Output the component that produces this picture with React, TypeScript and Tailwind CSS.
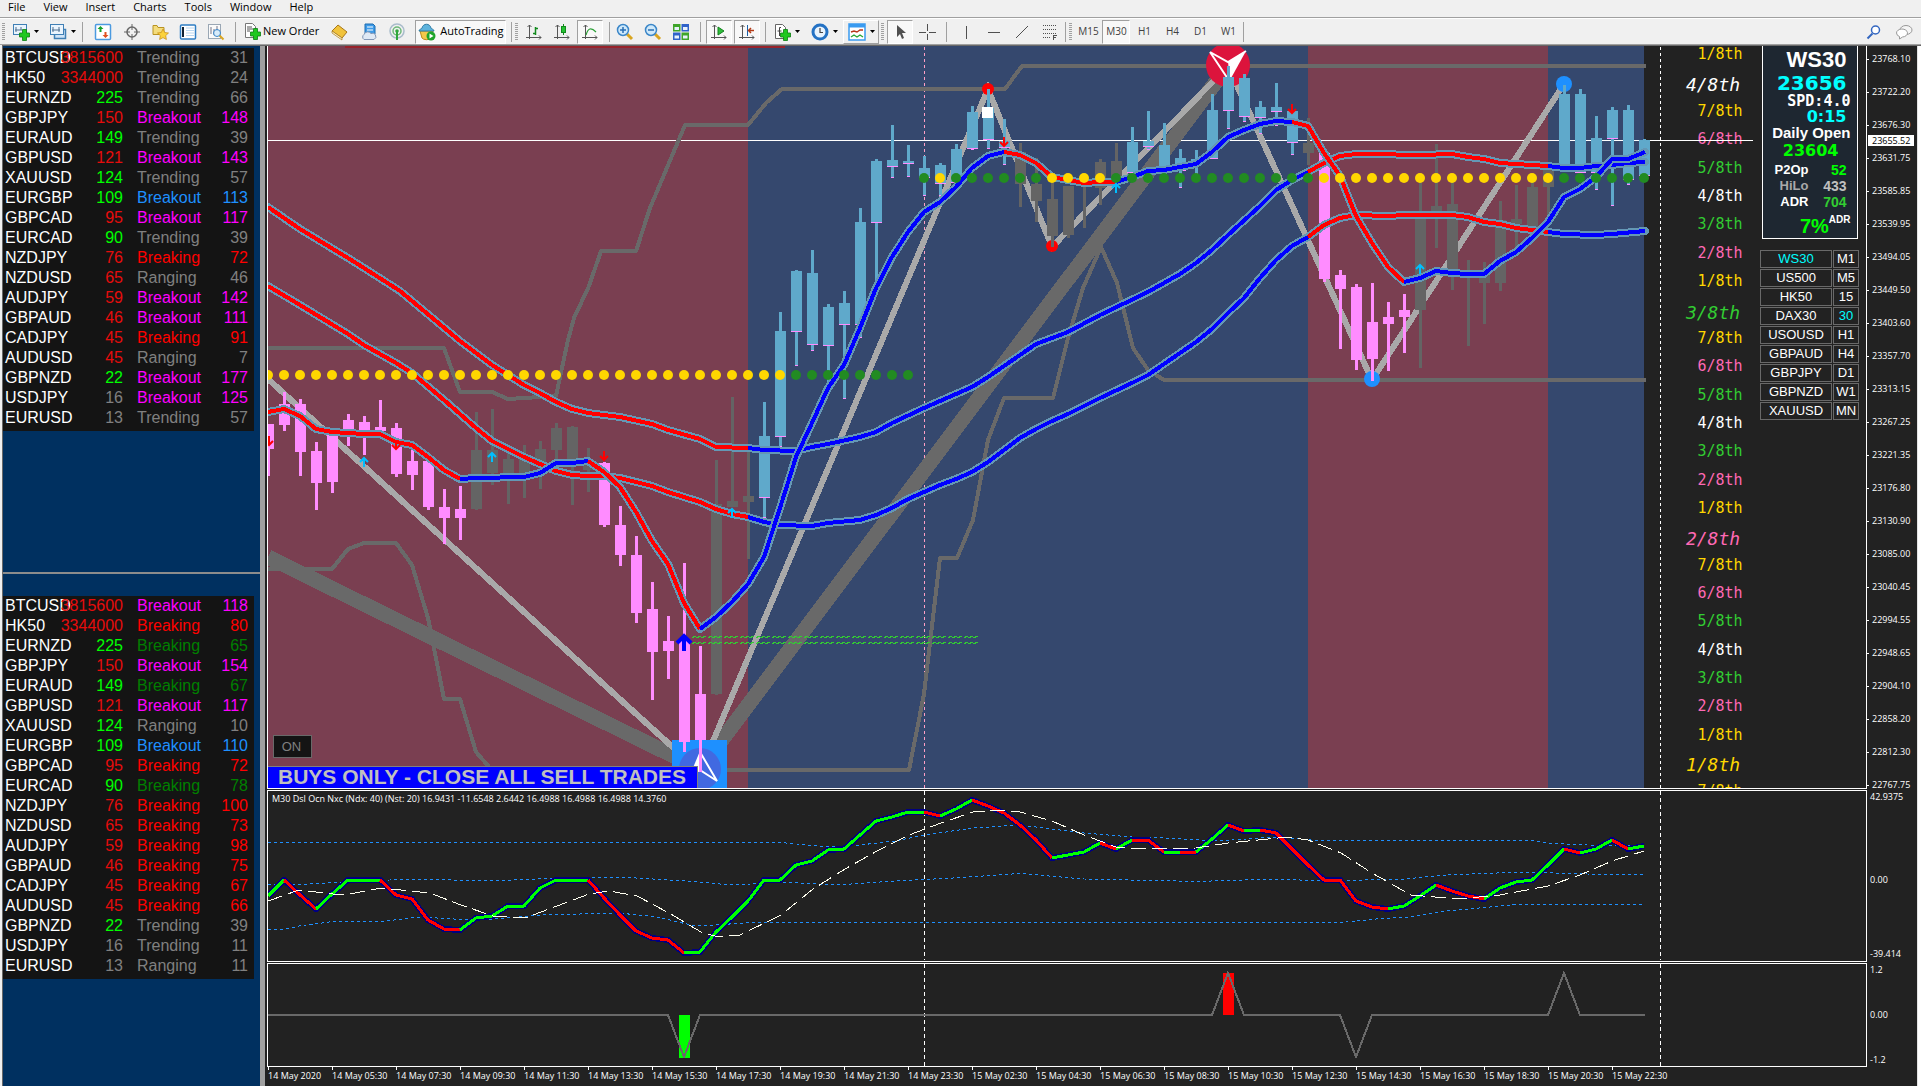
import type { ReactNode } from 'react';

const MENU = ['File', 'View', 'Insert', 'Charts', 'Tools', 'Window', 'Help'];

const STATE_COLORS: Record<string, string> = {
  g: 'text-[#808080]',
  m: 'text-[#ff00ff]',
  r: 'text-[#ff0000]',
  b: 'text-[#1e90ff]',
  d: 'text-[#008000]',
  l: 'text-[#00ff00]',
  c: 'text-[#e60c0c]',
};

type WatchRow = [string, string, string];

const SYMBOLS: WatchRow[] = [
  ['BTCUSD', '3815600', 'c'],
  ['HK50', '3344000', 'c'],
  ['EURNZD', '225', 'l'],
  ['GBPJPY', '150', 'c'],
  ['EURAUD', '149', 'l'],
  ['GBPUSD', '121', 'c'],
  ['XAUUSD', '124', 'l'],
  ['EURGBP', '109', 'l'],
  ['GBPCAD', '95', 'c'],
  ['EURCAD', '90', 'l'],
  ['NZDJPY', '76', 'c'],
  ['NZDUSD', '65', 'c'],
  ['AUDJPY', '59', 'c'],
  ['GBPAUD', '46', 'c'],
  ['CADJPY', '45', 'c'],
  ['AUDUSD', '45', 'c'],
  ['GBPNZD', '22', 'l'],
  ['USDJPY', '16', 'g'],
  ['EURUSD', '13', 'g'],
];

const STATES_TOP: WatchRow[] = [
  ['Trending', '31', 'g'],
  ['Trending', '24', 'g'],
  ['Trending', '66', 'g'],
  ['Breakout', '148', 'm'],
  ['Trending', '39', 'g'],
  ['Breakout', '143', 'm'],
  ['Trending', '57', 'g'],
  ['Breakout', '113', 'b'],
  ['Breakout', '117', 'm'],
  ['Trending', '39', 'g'],
  ['Breaking', '72', 'r'],
  ['Ranging', '46', 'g'],
  ['Breakout', '142', 'm'],
  ['Breakout', '111', 'm'],
  ['Breaking', '91', 'r'],
  ['Ranging', '7', 'g'],
  ['Breakout', '177', 'm'],
  ['Breakout', '125', 'm'],
  ['Trending', '57', 'g'],
];

const STATES_BOTTOM: WatchRow[] = [
  ['Breakout', '118', 'm'],
  ['Breaking', '80', 'r'],
  ['Breaking', '65', 'd'],
  ['Breakout', '154', 'm'],
  ['Breaking', '67', 'd'],
  ['Breakout', '117', 'm'],
  ['Ranging', '10', 'g'],
  ['Breakout', '110', 'b'],
  ['Breaking', '72', 'r'],
  ['Breaking', '78', 'd'],
  ['Breaking', '100', 'r'],
  ['Breaking', '73', 'r'],
  ['Breaking', '98', 'r'],
  ['Breaking', '75', 'r'],
  ['Breaking', '67', 'r'],
  ['Breaking', '66', 'r'],
  ['Trending', '39', 'g'],
  ['Trending', '11', 'g'],
  ['Ranging', '11', 'g'],
];

const PRICES = [
  '23768.10', '23722.20', '23676.30', '23631.75', '23585.85', '23539.95', '23494.05', '23449.50',
  '23403.60', '23357.70', '23313.15', '23267.25', '23221.35', '23176.80', '23130.90', '23085.00',
  '23040.45', '22994.55', '22948.65', '22904.10', '22858.20', '22812.30', '22767.75',
];

const TIMES = [
  '14 May 2020', '14 May 05:30', '14 May 07:30', '14 May 09:30', '14 May 11:30', '14 May 13:30',
  '14 May 15:30', '14 May 17:30', '14 May 19:30', '14 May 21:30', '14 May 23:30', '15 May 02:30',
  '15 May 04:30', '15 May 06:30', '15 May 08:30', '15 May 10:30', '15 May 12:30', '15 May 14:30',
  '15 May 16:30', '15 May 18:30', '15 May 20:30', '15 May 22:30',
];

const SWITCHER = [
  ['WS30', 'M1'],
  ['US500', 'M5'],
  ['HK50', '15'],
  ['DAX30', '30'],
  ['USOUSD', 'H1'],
  ['GBPAUD', 'H4'],
  ['GBPJPY', 'D1'],
  ['GBPNZD', 'W1'],
  ['XAUUSD', 'MN'],
];

// murrey levels: text, y, colour, major
const GOLD = '#ffd700';
const PINK = '#ff69b4';
const GREEN = '#32cd32';
const LEVELS: [string, number, string, boolean?][] = [
  ['1/8th', 54, GOLD],
  ['4/8th', 85, '#fff', true],
  ['7/8th', 111, GOLD],
  ['6/8th', 139, PINK],
  ['5/8th', 168, GREEN],
  ['4/8th', 196, '#fff'],
  ['3/8th', 224, GREEN],
  ['2/8th', 253, PINK],
  ['1/8th', 281, GOLD],
  ['3/8th', 313, GREEN, true],
  ['7/8th', 338, GOLD],
  ['6/8th', 366, PINK],
  ['5/8th', 395, GREEN],
  ['4/8th', 423, '#fff'],
  ['3/8th', 451, GREEN],
  ['2/8th', 480, PINK],
  ['1/8th', 508, GOLD],
  ['2/8th', 539, PINK, true],
  ['7/8th', 565, GOLD],
  ['6/8th', 593, PINK],
  ['5/8th', 621, GREEN],
  ['4/8th', 650, '#fff'],
  ['3/8th', 678, GREEN],
  ['2/8th', 706, PINK],
  ['1/8th', 735, GOLD],
  ['1/8th', 765, GOLD, true],
  ['7/8th', 791, GOLD],
];

// high, body top, body bottom, low, kind (p = bear, g = neutral, b = bull)
const CANDLES: [number, number, number, number, 'p' | 'g' | 'b'][] = [
  [424, 424, 449, 476, 'p'], [392, 404, 425, 431, 'p'], [399, 404, 452, 476, 'p'], [442, 451, 483, 510, 'p'],
  [435, 435, 482, 493, 'p'], [414, 420, 431, 446, 'p'], [416, 422, 433, 455, 'p'], [400, 427, 431, 431, 'p'],
  [423, 428, 474, 477, 'p'], [450, 461, 475, 490, 'p'], [461, 461, 507, 510, 'p'], [489, 507, 518, 544, 'p'],
  [486, 509, 518, 540, 'p'], [412, 450, 509, 510, 'g'], [409, 450, 473, 485, 'g'], [452, 459, 474, 504, 'g'],
  [445, 457, 474, 498, 'g'], [441, 449, 465, 489, 'g'], [423, 428, 450, 460, 'g'], [426, 427, 464, 505, 'g'],
  [448, 460, 470, 492, 'g'], [462, 463, 525, 527, 'p'], [506, 525, 555, 566, 'p'], [536, 555, 613, 623, 'p'],
  [582, 609, 652, 700, 'p'], [616, 641, 651, 679, 'p'], [563, 640, 742, 752, 'p'], [646, 694, 740, 772, 'p'],
  [460, 504, 694, 695, 'g'], [397, 501, 507, 507, 'g'], [452, 496, 502, 559, 'g'], [402, 436, 498, 518, 'b'],
  [312, 331, 437, 447, 'b'], [270, 271, 332, 366, 'b'], [250, 273, 345, 351, 'b'], [304, 307, 346, 390, 'b'],
  [291, 303, 325, 399, 'b'], [208, 222, 325, 338, 'b'], [159, 161, 223, 285, 'b'], [125, 160, 167, 178, 'b'],
  [145, 161, 164, 177, 'b'], [156, 168, 178, 196, 'b'], [163, 165, 184, 196, 'b'], [144, 149, 183, 183, 'b'],
  [106, 112, 149, 150, 'b'], [89, 108, 140, 149, 'b'], [119, 141, 148, 165, 'b'], [143, 152, 184, 207, 'g'],
  [158, 184, 201, 222, 'g'], [182, 199, 236, 247, 'g'], [186, 186, 235, 238, 'g'], [180, 183, 184, 228, 'g'],
  [159, 162, 188, 205, 'g'], [143, 161, 183, 183, 'g'], [127, 142, 173, 173, 'b'], [111, 141, 147, 150, 'b'],
  [123, 145, 167, 167, 'b'], [149, 158, 171, 188, 'b'], [150, 159, 165, 174, 'b'], [94, 110, 159, 159, 'b'],
  [66, 77, 111, 129, 'b'], [74, 78, 117, 122, 'b'], [101, 107, 118, 134, 'b'], [83, 107, 112, 126, 'b'],
  [111, 111, 143, 155, 'b'], [118, 143, 153, 165, 'g'], [151, 153, 279, 282, 'p'], [270, 275, 289, 349, 'p'],
  [284, 287, 360, 370, 'p'], [283, 322, 359, 381, 'p'], [302, 317, 324, 371, 'p'], [294, 310, 317, 353, 'p'],
  [182, 217, 310, 368, 'g'], [144, 206, 212, 248, 'g'], [182, 204, 272, 290, 'g'], [260, 272, 273, 346, 'g'],
  [262, 275, 283, 324, 'g'], [201, 220, 283, 291, 'g'], [185, 219, 224, 253, 'g'], [182, 187, 232, 232, 'g'],
  [168, 168, 187, 225, 'g'], [85, 94, 169, 169, 'b'], [89, 94, 173, 173, 'b'], [116, 138, 173, 190, 'b'],
  [107, 110, 139, 206, 'b'], [105, 110, 180, 185, 'b'], [139, 140, 176, 176, 'b'],
];
const CANDLE_FILL = { p: '#ff8cff', g: '#646464', b: '#5fa9cb' };

const RED = '#ff0000';
const BLUE = '#0000ff';

type Run = [string, string];

const FAST_MA: Run[] = [
  [RED, '268,412 284,409 300,416 316,429 332,432 348,433 364,434 380,434 396,442 412,445 428,457 444,470 460,479'],
  [BLUE, '460,479 476,478 492,478 508,477 524,477 540,473 556,463 572,463 588,461'],
  [RED, '588,461 604,472 620,487 636,512 652,541 668,564 684,603 700,629'],
  [BLUE, '700,629 716,617 732,602 748,584 764,557 780,508 796,457 812,423 828,388 844,365 860,328 876,288 892,257 908,232 924,212 940,202 956,187 972,168 988,156 1004,152'],
  [RED, '1004,152 1020,155 1036,163 1052,177 1068,180 1084,183 1100,182 1116,182'],
  [BLUE, '1116,182 1132,177 1148,171 1164,170 1180,167 1196,164 1212,152 1228,137 1244,130 1260,124 1276,121 1292,122'],
  [RED, '1292,122 1308,126 1324,153 1340,176 1356,216 1372,243 1388,267 1404,282'],
  [BLUE, '1404,282 1420,278 1436,271 1452,273 1468,274 1484,274 1500,261 1516,252 1532,238 1548,222 1564,197 1580,189 1596,177 1612,159 1628,159 1645,152'],
];

const MID_MA: Run[] = [
  [RED, '268,207 300,229 348,258 364,268 400,291 460,341 476,353 492,365 508,375 524,385 540,393 556,402 572,409 588,413 604,415 620,417 652,424 668,430 700,439 716,447 748,448'],
  [BLUE, '748,448 764,450 796,451 812,447 828,444 860,437 876,432 892,423 924,408 956,394 972,387 988,377 1004,366 1020,355 1036,344 1068,332 1100,315 1148,292 1180,274 1196,263 1212,250 1228,235 1260,206 1276,190 1292,180 1308,172'],
  [RED, '1308,172 1324,163 1340,156 1356,154 1372,154 1420,155 1452,154 1468,157 1484,159 1500,163 1532,165 1548,166'],
  [BLUE, '1548,166 1564,168 1580,168 1596,166 1612,165 1628,163 1645,162'],
];

const SLOW_MA: Run[] = [
  [RED, '268,286 300,305 348,334 364,345 396,363 412,373 444,400 460,414 476,428 492,441 508,449 524,457 540,464 556,471 572,475 588,476 604,476 620,478 652,486 668,492 700,502 716,509 732,514 748,517'],
  [BLUE, '748,517 764,522 780,525 812,526 828,523 860,520 876,515 892,508 908,499 924,492 940,485 956,479 972,472 988,462 1004,450 1020,438 1036,429 1052,421 1068,414 1100,398 1132,383 1148,375 1164,364 1196,342 1212,329 1228,313 1244,298 1260,278 1276,260 1292,246 1308,237'],
  [RED, '1308,237 1324,225 1340,218 1356,215 1388,216 1404,215 1452,215 1468,217 1484,222 1500,224 1516,228 1532,230 1548,232'],
  [BLUE, '1548,232 1564,234 1596,235 1612,234 1645,231'],
];

const OSC = [
  896, 880, 895, 909, 894, 880, 880, 880, 895, 899, 920, 929, 930, 918, 916, 906, 906, 888, 880, 880, 880, 898, 915,
  931, 938, 940, 953, 952, 932, 917, 901, 880, 880, 865, 861, 850, 849, 835, 821, 817, 812, 812, 816, 809, 800, 806,
  813, 825, 840, 858, 855, 852, 843, 849, 840, 840, 852, 852, 852, 839, 825, 831, 830, 833, 849, 865, 880, 880, 901,
  907, 909, 906, 896, 885, 891, 896, 899, 888, 882, 880, 865, 849, 853, 849, 840, 849, 846,
];
// [last index, colour] for every stretch of the oscillator
const OSC_RUNS: [number, string][] = [
  [1, 'g'], [3, 'r'], [7, 'g'], [12, 'r'], [20, 'g'], [26, 'r'], [41, 'g'], [42, 'r'], [44, 'g'], [49, 'r'],
  [52, 'g'], [53, 'r'], [54, 'g'], [56, 'r'], [57, 'g'], [58, 'r'], [60, 'g'], [61, 'r'], [62, 'g'], [70, 'r'],
  [73, 'g'], [76, 'r'], [81, 'g'], [82, 'r'], [84, 'g'], [85, 'r'], [86, 'g'],
];

const barX = (i: number) => 268 + 16 * i;

const oscPoints = (from: number, to: number) =>
  OSC.slice(from, to + 1)
    .map((y, k) => `${barX(from + k)},${y}`)
    .join(' ');

const dotColor = (x: number) => {
  if (x < 924) return x <= 780 ? GOLD : '#228b22';
  if (x === 940 || (x >= 1052 && x <= 1100) || (x >= 1324 && x <= 1548)) return GOLD;
  return '#228b22';
};

const Ribbon = ({ runs }: { runs: Run[] }) => (
  <g fill="none" strokeLinejoin="round">
    {runs.map(([, pts], i) => (
      <polyline key={i} points={pts} stroke="#6497b5" strokeWidth={8} strokeLinecap="round" />
    ))}
    {runs.map(([color, pts], i) => (
      <polyline key={i} points={pts} stroke={color} strokeWidth={4} />
    ))}
  </g>
);

const Arrow = ({ x, y, up }: { x: number; y: number; up?: boolean }) => (
  <path
    d={up ? 'M0 5V-3M-4 0L0 -4L4 0' : 'M0 -5V3M-4 0L0 4L4 0'}
    transform={`translate(${x} ${y})`}
    fill="none"
    stroke={up ? '#00bfff' : '#ff0000'}
    strokeWidth={2}
  />
);

const PriceChart = () => (
  <svg className="block h-full w-full" role="img" aria-label="WS30 M30 price chart">
    <g transform="translate(-268 -46)" shapeRendering="crispEdges">
      <rect x={268} y={46} width={480} height={760} fill="#7a3f51" />
      <rect x={748} y={46} width={560} height={760} fill="#35486e" />
      <rect x={1308} y={46} width={240} height={760} fill="#7a3f51" />
      <rect x={1548} y={46} width={96} height={760} fill="#35486e" />
      <rect x={345} y={46} width={440} height={2} fill="#98232b" />

      <g
        fontFamily="'DejaVu Sans Mono', 'Liberation Mono', monospace"
        textAnchor="middle"
        shapeRendering="auto"
      >
        {LEVELS.map(([text, y, color, major], i) => (
          <text
            key={i}
            x={major ? 1713 : 1720}
            y={major ? y + 6 : y + 5}
            fill={color}
            fontSize={major ? 18 : 15}
            fontStyle={major ? 'oblique' : 'normal'}
          >
            {text}
          </text>
        ))}
      </g>

      <path d="M268 140.5H1753" stroke="#fff" />
      <path d="M924.5 47V806" stroke="#ff9fc4" strokeDasharray="3 3" />
      <path d="M1660.5 47V806" stroke="#fff" strokeDasharray="3 3" />

      <g fill="none" stroke="#696969" strokeWidth={4} strokeLinejoin="round">
        <polyline points="268,348 444,348 460,392 492,392 508,399 524,398 540,397 556,396 568,340 574,318 589,286 601,251 636,251 650,208 685,125 748,125 766,103 782,89 1005,89 1022,66 1646,66" />
        <polyline points="268,569 332,569 348,549 364,543 396,543 412,565 428,618 444,699 460,699 476,752 490,768 500,770 909,770 924,694 940,558 957,558 973,520 988,440 1004,398 1053,398 1068,338 1083,288 1101,247 1117,283 1133,348 1148,370 1164,380 1646,380" />
      </g>
      <polyline points="268,557 700,769 1228,66" fill="none" stroke="#696969" strokeWidth={15} />
      <polyline
        points="268,379 700,772 988,89 1052,247 1228,66 1372,380 1564,84"
        fill="none"
        stroke="#a9a9a9"
        strokeWidth={6}
      />

      <g shapeRendering="auto">
        <rect x={672} y={740} width={55} height={60} fill="#1e90ff" />
        <circle cx={700} cy={769} r={21} fill="#4169e1" />
        <path d="M700 751L690 775L701 771Z" fill="#fff" />
        <path d="M700 752L717 781L700 770Z" fill="none" stroke="#fff" strokeWidth={2} />
        <circle cx={1228} cy={65} r={22} fill="#dc143c" />
        <path d="M1246 51L1228 62L1230 80Z" fill="#fff" />
        <path d="M1210 52L1228 62L1246 51M1210 52L1228 79" fill="none" stroke="#fff" strokeWidth={2} />
        <circle cx={988} cy={89} r={6} fill="#ff0000" />
        <circle cx={1052} cy={246} r={6} fill="#ff0000" />
        <circle cx={1372} cy={379} r={8} fill="#1e90ff" />
        <circle cx={1564} cy={84} r={8} fill="#1e90ff" />
      </g>

      {CANDLES.map(([high, top, bottom, low, kind], i) => (
        <g key={i} fill={CANDLE_FILL[kind]}>
          <rect x={barX(i) - 1} y={high} width={3} height={low - high} />
          <rect x={barX(i) - 5} y={top} width={11} height={bottom - top} />
          {kind === 'b' && (
            <>
              <rect x={barX(i) - 5} y={bottom - 1} width={11} height={1} fill="#ff8cff" />
              <rect x={barX(i) - 1} y={low - 1} width={3} height={1} fill="#ff8cff" />
            </>
          )}
        </g>
      ))}
      <rect x={982} y={107} width={11} height={11} fill="#fff" />

      {Array.from({ length: 18 }, (_, i) => (
        <path
          key={i}
          d={`M${692 + 16 * i} 638l3-2l2 2l3-2l2 2l3-2l1 1M${692 + 16 * i} 644l3-2l2 2l3-2l2 2l3-2l1 1`}
          fill="none"
          stroke="#32cd32"
        />
      ))}

      <Ribbon runs={SLOW_MA} />
      <Ribbon runs={MID_MA} />
      <Ribbon runs={FAST_MA} />

      <g shapeRendering="auto">
        {Array.from({ length: 41 }, (_, i) => (
          <circle key={i} cx={barX(i)} cy={375} r={5} fill={dotColor(barX(i))} />
        ))}
        {Array.from({ length: 46 }, (_, i) => (
          <circle key={i} cx={barX(i + 41)} cy={178} r={5} fill={dotColor(barX(i + 41))} />
        ))}
      </g>

      <g shapeRendering="auto">
        <Arrow x={269} y={441} />
        <Arrow x={396} y={445} />
        <Arrow x={604} y={456} />
        <Arrow x={1004} y={142} />
        <Arrow x={1292} y={109} />
        <Arrow x={364} y={462} up />
        <Arrow x={492} y={457} up />
        <Arrow x={732} y={513} up />
        <Arrow x={1116} y={188} up />
        <Arrow x={1420} y={269} up />
        <path d="M684 651V638M677 643L684 636L691 643" fill="none" stroke="#0000ff" strokeWidth={4} />
      </g>
    </g>
  </svg>
);

const OscillatorChart = () => (
  <svg className="block h-full w-full" role="img" aria-label="Dsl Ocn Nxc oscillator">
    <g transform="translate(-268 -791)" shapeRendering="crispEdges" fill="none">
      <g stroke="#1e90ff" strokeDasharray="3 3">
        <polyline points="268,842.5 781,842.5 817,846 851,846 895,841 925,835 973,828 1020,825 1084,833 1132,837 1148,837 1217,841 1276,837 1317,840.5 1534,840.5 1546,843 1587,845 1644,845.5" />
        <polyline points="268,885 308,884 410,879 493,881 556,878 619,877 687,881 720,884 750,884 779,882 817,884 851,884 895,881 953,878 1020,873.5 1084,879 1176,881 1211,881 1276,879 1323,881 1405,879 1446,875 1523,872 1587,874 1644,874.5" />
        <polyline points="268,929.5 284,929.5 299,926 333,921.5 381,921.5 420,917 454,919 493,919 541,915 619,913 657,917 691,925 716,925 750,922.5 1341,922.5 1376,919 1411,917 1446,911 1517,904.5 1644,904.5" />
      </g>
      <path d="M924.5 791V960" stroke="#fff" strokeDasharray="4 3" />
      <path d="M1660.5 791V960" stroke="#fff" strokeDasharray="4 3" />
      <polyline points={oscPoints(0, 86)} stroke="#000080" strokeWidth={6} strokeLinejoin="round" />
      {OSC_RUNS.map(([to, color], i) => (
        <polyline
          key={i}
          points={oscPoints(i ? OSC_RUNS[i - 1][0] : 0, to)}
          stroke={color === 'g' ? '#00ff00' : '#ff0000'}
          strokeWidth={3}
          strokeLinejoin="round"
        />
      ))}
      <polyline
        points="268,901 299,890 333,894 350,894 381,888 430,893 461,905 493,916 525,918 557,906 589,894 609,891 637,896 669,913 701,932 718,937 740,935 781,915 813,889 845,869 877,851 909,835 941,823 973,812 997,810 1020,812 1052,821 1084,835 1116,847 1141,849 1196,848 1228,843 1258,840 1288,837 1308,840 1341,853 1372,873 1411,895 1458,899 1500,895 1548,886 1580,875 1612,861 1644,851"
        stroke="#fffff0"
        strokeDasharray="15 6"
      />
    </g>
  </svg>
);

const SignalChart = () => (
  <svg className="block h-full w-full" role="img" aria-label="Signal histogram">
    <g transform="translate(-268 -964)" shapeRendering="crispEdges" fill="none">
      <path d="M924.5 964V1066" stroke="#fff" strokeDasharray="4 3" />
      <path d="M1660.5 964V1066" stroke="#fff" strokeDasharray="4 3" />
      <rect x={679} y={1015} width={11} height={43} fill="#00ff00" />
      <rect x={1223} y={973} width={11} height={42} fill="#ff0000" />
      <polyline
        points="268,1015 668,1015 684,1057 700,1015 1212,1015 1228,973 1244,1015 1340,1015 1356,1057 1372,1015 1548,1015 1564,973 1580,1015 1645,1015"
        stroke="#696969"
        strokeWidth={2}
      />
    </g>
  </svg>
);

const Watchlist = ({ title, states }: { title: string; states: WatchRow[] }) => (
  <div className="w-[251px] bg-[#141414] pb-[3px]">
    <table
      aria-label={title}
      className="w-full table-fixed border-collapse text-base leading-[19px] whitespace-nowrap"
    >
      <colgroup>
        <col className="w-[50px]" />
        <col className="w-[70px]" />
        <col className="w-[80px]" />
        <col />
      </colgroup>
      <tbody>
        {SYMBOLS.map(([symbol, value, color], i) => (
          <tr key={symbol} className="h-5 align-top">
            <td className="p-0 pl-0.5 text-white">{symbol}</td>
            <td className={`p-0 text-right ${STATE_COLORS[color]}`}>{value}</td>
            <td className={`p-0 pl-3.5 ${STATE_COLORS[states[i][2]]}`}>{states[i][0]}</td>
            <td className={`p-0 pr-1.5 text-right ${STATE_COLORS[states[i][2]]}`}>{states[i][1]}</td>
          </tr>
        ))}
      </tbody>
    </table>
  </div>
);

const Sep = () => <span className="mx-px h-5 w-px shrink-0 bg-[#a0a0a0]" />;

const Grip = () => (
  <span className="flex h-6 w-[7px] shrink-0 flex-col items-center justify-center gap-px">
    {Array.from({ length: 9 }, (_, i) => (
      <span key={i} className="h-px w-[3px] bg-[#a0a0a0]" />
    ))}
  </span>
);

const PRESSED = 'border border-t-[#a0a0a0] border-l-[#a0a0a0] border-r-white border-b-white bg-[#f8f8f8]';

const Tool = ({
  label,
  width = 'w-7',
  pressed,
  children,
}: {
  label: string;
  width?: string;
  pressed?: boolean;
  children: ReactNode;
}) => (
  <button
    type="button"
    aria-label={label}
    aria-pressed={pressed}
    className={`flex h-6 shrink-0 items-center justify-center ${width} ${pressed ? PRESSED : ''}`}
  >
    {children}
  </button>
);

const Icon = ({ children }: { children: ReactNode }) => (
  <svg width={18} height={18} viewBox="0 0 18 18" fill="none" className="shrink-0" aria-hidden>
    {children}
  </svg>
);

const Caret = () => (
  <svg width={5} height={3} viewBox="0 0 5 3" className="ml-1 shrink-0" aria-hidden>
    <path d="M0 0H5L2.5 3Z" fill="#000" />
  </svg>
);

const Plus = () => (
  <path d="M10.500 6.500h4v3.500h3v4h-3v3.500h-4V14h-3v-4h3z" fill="#1fc81f" stroke="#0b7d12" strokeWidth={0.8} />
);

const Axes = () => <path d="M4.500 2V16M1 14.500H16M2.500 4l2-2l2 2M14 12.500l2 2l-2 2" stroke="#555" />;

const Magnifier = ({ plus }: { plus?: boolean }) => (
  <Icon>
    <path d="M11 11l5 5" stroke="#d9a520" strokeWidth={3} />
    <circle cx={7} cy={7} r={5.500} fill="#cfe9fa" stroke="#3b86c8" strokeWidth={1.500} />
    <path d={plus ? 'M4 7h6M7 4v6' : 'M4 7h6'} stroke="#2a6fb5" strokeWidth={1.500} />
  </Icon>
);

const Toolbar = () => (
  <div role="toolbar" className="flex h-[26px] items-center border-t border-white text-[11px] text-black">
    <Grip />
    <Tool label="New chart" width="w-9">
      <Icon>
        <rect x={1.500} y={1.500} width={13} height={10} fill="#eaf4fd" stroke="#3f7fb5" />
        <path d="M4 4v5M3 7h7M9 4v3" stroke="#4c6f8f" />
        <Plus />
      </Icon>
      <Caret />
    </Tool>
    <Tool label="Profiles" width="w-[38px]">
      <Icon>
        <rect x={5.500} y={6.500} width={11} height={9} fill="#cfe4f7" stroke="#3f7fb5" strokeWidth={1.500} />
        <rect x={1.500} y={1.500} width={13} height={10} fill="#eaf4fd" stroke="#3f7fb5" />
        <path d="M4 4v5M3 7h8M10 4v5" stroke="#4c6f8f" />
      </Icon>
      <Caret />
    </Tool>
    <Sep />
    <Tool label="Market watch" width="w-[38px]">
      <Icon>
        <rect x={1.500} y={1.500} width={15} height={15} rx={1} fill="#fff" stroke="#4b9ae0" strokeWidth={1.500} />
        <path d="M6.500 3l3 3h-2v3h-2V6h-2z" fill="#15a12b" />
        <path d="M11.500 15l3-3h-2V9h-2v3h-2z" fill="#e05020" />
      </Icon>
    </Tool>
    <Tool label="Data window" width="w-5">
      <Icon>
        <circle cx={9} cy={9} r={5} stroke="#666" strokeWidth={1.500} />
        <path d="M9 1v6M9 11v6M1 9h6M11 9h6" stroke="#666" />
      </Icon>
    </Tool>
    <Tool label="Navigator" width="w-9">
      <Icon>
        <path d="M2 2.500h4l1 2h6v7H2z" fill="#f4dc7c" stroke="#b99322" />
        <path d="M12 6l1.700 3.500l3.800.5l-2.800 2.600l.7 3.900L12 14.600l-3.400 1.900l.7-3.900L6.500 10l3.800-.5z" fill="#fbd23c" stroke="#c58a10" strokeWidth={0.7} />
      </Icon>
    </Tool>
    <Tool label="Terminal" width="w-5">
      <Icon>
        <rect x={1.500} y={2} width={15} height={14} rx={1} fill="#fff" stroke="#2f7ec4" strokeWidth={1.500} />
        <path d="M4 4v10" stroke="#123" strokeWidth={2} />
        <path d="M7 5h8M7 7.500h8M7 10h8M7 12.500h8" stroke="#b9d6ef" />
      </Icon>
    </Tool>
    <Tool label="Strategy tester" width="w-9">
      <Icon>
        <rect x={1.500} y={1.500} width={12} height={14} fill="#fafafa" stroke="#9aa7b4" />
        <path d="M4 4v7M7 6v6M10 3v5" stroke="#778" />
        <path d="M12.500 12.500l4 4" stroke="#d9a520" strokeWidth={2} />
        <circle cx={10} cy={10} r={3.500} fill="#cfe9fa" fillOpacity={0.8} stroke="#3b86c8" />
      </Icon>
    </Tool>
    <Sep />
    <button type="button" className="ml-1.5 flex h-6 shrink-0 items-center gap-0.5 pb-px">
      <Icon>
        <path d="M2.500 1.500h7l3 3v11h-10z" fill="#fff" stroke="#777" />
        <path d="M4 5h5M4 7h6M4 9h3" stroke="#555" />
        <Plus />
      </Icon>
      New Order
    </button>
    <Tool label="MetaEditor" width="w-10">
      <Icon>
        <path d="M8 2l9 7l-5 6l-10-7z" fill="#f1c33c" stroke="#a8781a" />
        <path d="M2 8l10 7v2L2 10z" fill="#fff3c4" stroke="#a8781a" strokeWidth={0.700} />
      </Icon>
    </Tool>
    <Tool label="Storage" width="w-5">
      <Icon>
        <path d="M5 1h8l2 2v8H5z" fill="#3e9be8" stroke="#1d6cb0" />
        <path d="M7 4h6M7 7h6" stroke="#fff" />
        <path d="M4 16.500a3 3 0 0 1 0-5a4 4 0 0 1 7-1a3 3 0 0 1 3 6z" fill="#dfe9f5" stroke="#8296b5" />
      </Icon>
    </Tool>
    <Tool label="Signals" width="w-9">
      <Icon>
        <circle cx={9} cy={8} r={7} stroke="#a9bccb" strokeWidth={1.500} />
        <circle cx={9} cy={8} r={4} stroke="#6cb878" strokeWidth={1.500} />
        <circle cx={9} cy={8} r={1.800} fill="#2fa63c" />
        <path d="M9 9v8" stroke="#2fa63c" strokeWidth={2} />
      </Icon>
    </Tool>
    <button type="button" aria-pressed className={`flex h-6 shrink-0 items-center gap-1 px-0.5 ${PRESSED}`}>
      <Icon>
        <path d="M2 8h13l-2 7a5 3 0 0 1-9 0z" fill="#f3c84a" stroke="#b98a1c" />
        <path d="M1 8c0-2 3-2 3-3c1-5 8-5 9 0c0 1 3 1 3 3z" fill="#5db3dd" stroke="#2f7ca6" />
        <circle cx={13} cy={13} r={4.500} fill="#1fa52b" />
        <path d="M11.500 10.500l4 2.500l-4 2.500z" fill="#fff" />
      </Icon>
      AutoTrading
    </button>
    <span className="w-1 shrink-0" />
    <Sep />
    <Grip />
    <Tool label="Bar chart">
      <Icon>
        <Axes />
        <path d="M10.500 4v8M8 10.500h2.500M10.500 5.500H13" stroke="#118a1c" strokeWidth={1.500} />
      </Icon>
    </Tool>
    <Tool label="Candlesticks">
      <Icon>
        <Axes />
        <path d="M10.500 1v11" stroke="#118a1c" />
        <rect x={8.500} y={3.500} width={4} height={6} fill="#25c232" stroke="#118a1c" />
      </Icon>
    </Tool>
    <span className="w-px shrink-0" />
    <Tool label="Line chart" pressed width="w-[26px]">
      <Icon>
        <Axes />
        <path d="M5 12c2-7 5-8 10-3" stroke="#2ba036" strokeWidth={1.200} />
      </Icon>
    </Tool>
    <span className="w-[5px] shrink-0" />
    <Sep />
    <Tool label="Zoom in">
      <Magnifier plus />
    </Tool>
    <Tool label="Zoom out">
      <Magnifier />
    </Tool>
    <Tool label="Tile windows">
      <Icon>
        <path d="M1 1h7.500v7.500H1zM9.500 9.500H17V17H9.500z" fill="#3fa52a" />
        <path d="M9.500 1H17v7.500H9.500zM1 9.500h7.500V17H1z" fill="#2f62c9" />
        <path d="M2.500 4h4.500v3H2.500zM11 4h4.500v3H11zM2.500 12.500h4.500v3H2.500zM11 12.500h4.500v3H11z" fill="#e8f1fb" />
      </Icon>
    </Tool>
    <span className="w-1 shrink-0" />
    <Sep />
    <span className="w-1 shrink-0" />
    <Tool label="Auto scroll" pressed width="w-[26px]">
      <Icon>
        <Axes />
        <path d="M8 4l6 4l-6 4z" fill="#2fbf3a" stroke="#14801f" />
      </Icon>
    </Tool>
    <span className="w-0.5 shrink-0" />
    <Tool label="Chart shift" pressed width="w-[26px]">
      <Icon>
        <Axes />
        <path d="M9.500 2v11" stroke="#1c62a8" />
        <path d="M16 7.500h-5M13 5l-2.500 2.500L13 10" stroke="#b33a16" strokeWidth={1.500} />
      </Icon>
    </Tool>
    <span className="w-1 shrink-0" />
    <Sep />
    <Tool label="Indicators" width="w-[38px]">
      <Icon>
        <path d="M2.500 1.500h7l3 3v11h-10z" fill="#fff" stroke="#666" />
        <path d="M8 4.500H6.500V13M4.500 8h4" stroke="#444" />
        <Plus />
      </Icon>
      <Caret />
    </Tool>
    <Tool label="Periods" width="w-[38px]">
      <Icon>
        <circle cx={9} cy={9} r={7} fill="#e8f3fd" stroke="#2472c4" strokeWidth={3} />
        <path d="M9 5v4.500h3" stroke="#444" strokeWidth={1.200} />
      </Icon>
      <Caret />
    </Tool>
    <button
      type="button"
      aria-label="Templates"
      className="flex h-6 w-9 shrink-0 items-center justify-center border border-t-white border-r-[#a0a0a0] border-b-[#a0a0a0] border-l-white"
    >
      <Icon>
        <rect x={1} y={1} width={16} height={16} fill="#fff" stroke="#3a9bf0" strokeWidth={1.500} />
        <path d="M1 1h16v3.500H1z" fill="#3a9bf0" />
        <path d="M3 9l3-1l3 1l3-2l3 0" stroke="#b8351a" strokeWidth={1.400} />
        <path d="M3 14l3-2l3 2l3-2l3 2" stroke="#2aa636" strokeWidth={1.400} />
      </Icon>
      <Caret />
    </button>
    <Grip />
    <span className="w-px shrink-0" />
    <Tool label="Cursor" pressed width="w-[26px]">
      <Icon>
        <path d="M6 2v12l3-3l2 5l2-1l-2-5h4z" fill="#505050" />
      </Icon>
    </Tool>
    <Tool label="Crosshair">
      <Icon>
        <path d="M9.500 1v7M9.500 11v6M1 9.500h7M11 9.500h7" stroke="#505050" />
      </Icon>
    </Tool>
    <span className="w-1 shrink-0" />
    <Sep />
    <span className="w-1 shrink-0" />
    <Tool label="Vertical line">
      <Icon>
        <path d="M9.500 3v13" stroke="#505050" />
      </Icon>
    </Tool>
    <Tool label="Horizontal line">
      <Icon>
        <path d="M3 9.500h12" stroke="#505050" />
      </Icon>
    </Tool>
    <Tool label="Trendline">
      <Icon>
        <path d="M3 15L15 3" stroke="#505050" />
      </Icon>
    </Tool>
    <Tool label="Fibonacci retracement">
      <Icon>
        <path d="M2 2.500h14M2 6.500h14M2 10.500h14M2 14.500h8" stroke="#505050" strokeDasharray="1 1" />
        <path d="M12.500 17v-5M12 12.500h4M12 14.500h3" stroke="#505050" />
      </Icon>
    </Tool>
    <Sep />
    <Grip />
    <div className="flex items-center text-[10px] text-[#404040]">
      {['M15', 'M30', 'H1', 'H4', 'D1', 'W1'].map((tf) => (
        <button
          key={tf}
          type="button"
          aria-pressed={tf === 'M30'}
          className={`h-6 w-7 shrink-0 ${tf === 'M30' ? PRESSED : ''}`}
        >
          {tf}
        </button>
      ))}
    </div>
    <Sep />
    <div className="ml-auto flex items-center gap-3 pr-2">
      <button type="button" aria-label="Search">
        <Icon>
          <path d="M2.500 15.500l5-5" stroke="#3366c0" strokeWidth={2} />
          <circle cx={10.500} cy={7} r={4} fill="#fff" stroke="#3366c0" strokeWidth={1.500} />
        </Icon>
      </button>
      <button type="button" aria-label="Chat">
        <Icon>
          <ellipse cx={11} cy={7} rx={6} ry={4.500} fill="#f5f5f5" stroke="#999" />
          <path d="M1.500 10a5.500 4 0 1 1 6 4l-3 2v-2.500a4 4 0 0 1-3-3.500z" fill="#fff" stroke="#999" />
        </Icon>
      </button>
    </div>
  </div>
);

const InfoPanel = () => (
  <div className="h-[193px] w-24 border border-t-0 border-white bg-[#1e2731] pr-2.5 text-right font-bold whitespace-nowrap text-white">
    <div className="text-[22px] leading-7">WS30</div>
    <div className="font-['DejaVu_Sans',sans-serif] text-[20px] leading-[18px] text-[#00ffff]">23656</div>
    <div className="-mr-1 font-['DejaVu_Sans_Mono',monospace] text-[15px] leading-[18px]">SPD:4.0</div>
    <div className="font-['DejaVu_Sans',sans-serif] text-base leading-[14px] text-[#00ffff]">0:15</div>
    <div className="-mr-1 text-[15px] leading-[18px]">Daily Open</div>
    <div className="pr-2 font-['DejaVu_Sans',sans-serif] text-base leading-[18px] text-[#00ff00]">23604</div>
    <dl className="grid grid-cols-[46px_1fr] pt-0.5 text-[14px] leading-4">
      <dt className="text-[13px]">P2Op</dt>
      <dd className="text-[#00ff00]">52</dd>
      <dt className="text-[13px] text-[#a9a9a9]">HiLo</dt>
      <dd className="text-[#c0c0c0]">433</dd>
      <dt className="text-[13px]">ADR</dt>
      <dd className="text-[#32cd32]">704</dd>
    </dl>
    <div className="-mr-1 flex items-start justify-end pt-1">
      <span className="text-[20px] leading-6 text-[#00ff00]">7%</span>
      <span className="text-[10px] leading-3">ADR</span>
    </div>
  </div>
);

const AXIS = "w-[50px] shrink-0 font-['Open_Sans','Noto_Sans',sans-serif] text-[9px] text-white";
const PLOT = 'relative min-w-0 flex-1 overflow-hidden border-x border-b border-white';

const App = () => {
  return (
    <div className="flex h-screen flex-col overflow-hidden bg-[#f0f0f0] font-['Liberation_Sans',Arial,sans-serif]">
      <header className="shrink-0 border-b border-[#a0a0a0] font-['Open_Sans','Noto_Sans',sans-serif]">
        <nav className="flex h-[18px] gap-[18px] border-b border-[#a0a0a0] pl-2 text-[11px] leading-[14px] text-black">
          {MENU.map((item) => (
            <button key={item} type="button" className="h-[14px]">
              {item}
            </button>
          ))}
        </nav>
        <Toolbar />
      </header>

      <main className="ml-0.5 flex min-h-0 flex-1 border-t border-l border-[#696969]">
        <aside className="flex w-[257px] shrink-0 flex-col bg-[#003060]">
          <section className="h-[526px] shrink-0 pt-0.5">
            <Watchlist title="Trend watchlist" states={STATES_TOP} />
          </section>
          <section className="flex-1 border-t-2 border-[#8c8c8c] pt-[22px]">
            <Watchlist title="Range watchlist" states={STATES_BOTTOM} />
          </section>
        </aside>
        <div className="w-[5px] shrink-0 bg-[#a0a0a0]" />

        <section className="flex min-w-0 flex-1 flex-col gap-px bg-[#222222] pl-0.5">
          <div className="flex min-h-0 flex-1">
            <div className={PLOT}>
              <PriceChart />
              <div className="absolute top-0 right-[7px] flex w-[99px] flex-col items-center gap-[11px]">
                <InfoPanel />
                <div className="grid w-full grid-cols-[72px_26px] gap-px text-[13px] leading-4">
                  {SWITCHER.map(([symbol, period]) => [
                    <button
                      key={symbol}
                      type="button"
                      className={`h-[18px] border border-[#696969] ${symbol === 'WS30' ? 'text-[#00ffff]' : 'text-white'}`}
                    >
                      {symbol}
                    </button>,
                    <button
                      key={period}
                      type="button"
                      className={`h-[18px] border border-[#696969] ${period === '30' ? 'text-[#00ffff]' : 'text-white'}`}
                    >
                      {period}
                    </button>,
                  ])}
                </div>
              </div>
              <div className="absolute bottom-0 left-0 flex flex-col items-start gap-2">
                <button
                  type="button"
                  className="ml-[5px] h-[23px] w-[39px] border border-[#696969] bg-[#141414] pr-0.5 text-[13px] text-[#808080]"
                >
                  ON
                </button>
                <p className="h-[22px] w-[430px] border-t border-r border-[#808080] bg-[#0000ff] pl-2.5 text-[21px] leading-5 font-bold whitespace-nowrap text-[#c0c0c0]">
                  BUYS ONLY - CLOSE ALL SELL TRADES
                </p>
              </div>
            </div>
            <ol className={`relative flex flex-col gap-[7px] ${AXIS}`}>
              {PRICES.map((price) => (
                <li key={price} className="flex h-[26px] shrink-0 items-center gap-[3px]">
                  <span className="h-px w-0.5 bg-white" />
                  {price}
                </li>
              ))}
              <li className="absolute top-[89px] left-px h-[11px] w-[46px] bg-white pl-1 leading-[11px] text-black">
                23655.52
              </li>
            </ol>
          </div>

          <div className="flex h-[172px] shrink-0">
            <div className={`${PLOT} border-t`}>
              <OscillatorChart />
              <p className="absolute top-[2px] left-1 font-['Open_Sans','Noto_Sans',sans-serif] text-[9px] leading-3 whitespace-nowrap text-white">
                M30 Dsl Ocn Nxc (Ndx: 40) (Nst: 20) 16.9431 -11.6548 2.6442 16.4988 16.4988 16.4988 14.3760
              </p>
            </div>
            <ol className={`flex flex-col pl-[3px] leading-[14px] ${AXIS}`}>
              <li>42.9375</li>
              <li className="mt-[69px]">0.00</li>
              <li className="mt-[60px]">-39.414</li>
            </ol>
          </div>

          <div className="flex h-[104px] shrink-0">
            <div className={`${PLOT} border-t`}>
              <SignalChart />
            </div>
            <ol className={`flex flex-col justify-between pl-[3px] leading-[14px] ${AXIS}`}>
              <li>1.2</li>
              <li>0.00</li>
              <li>-1.2</li>
            </ol>
          </div>

          <ol className="-mt-px flex h-[19px] shrink-0 overflow-hidden pl-px font-['Open_Sans','Noto_Sans',sans-serif] text-[9px] leading-3 whitespace-nowrap text-white">
            {TIMES.map((time) => (
              <li key={time} className="w-16 shrink-0">
                <span className="block h-[3px] w-px bg-white" />
                {time}
              </li>
            ))}
          </ol>
        </section>
        <div className="w-1 shrink-0 border-l border-[#e3e3e3] bg-white" />
      </main>
    </div>
  );
};

export default App;
